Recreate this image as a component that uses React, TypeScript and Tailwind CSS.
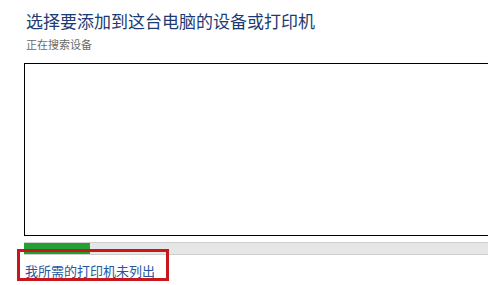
export default function App() {
  return (
    <div
      className="relative h-[285px] w-[488px] overflow-hidden bg-white"
      style={{ fontFamily: '"Noto Sans CJK SC", "Noto Sans", sans-serif' }}
    >
      {/* Header */}
      <div className="pl-[26px] pt-[11px]">
        <h1 className="text-[17px] leading-[20px] text-[#1c3b72]">选择要添加到这台电脑的设备或打印机</h1>
        <p className="mt-[7px] text-[11px] leading-[12px] text-[#6b6b6b]">正在搜索设备</p>
      </div>

      {/* Device list */}
      <div className="ml-[24px] mt-[13px] h-[173px] border-y-[1.5px] border-l-[1.5px] border-black bg-white" />

      {/* Progress */}
      <div className="ml-[24px] mt-[6px] flex h-[13px] border-y border-[#cfcfcf] bg-[#e6e6e6]">
        <div className="h-full w-[66px] bg-[#23a032]" />
      </div>

      {/* Link */}
      <div className="pl-[25px] pt-[2px]">
        <span className="text-[13px] leading-[16px] text-[#2557a0]">我所需的打印机未列出</span>
      </div>

      {/* Highlight annotation */}
      <div className="absolute left-[17px] top-[249px] h-[32px] w-[152px] border-[3px] border-[#c8161d]" />
    </div>
  );
}
